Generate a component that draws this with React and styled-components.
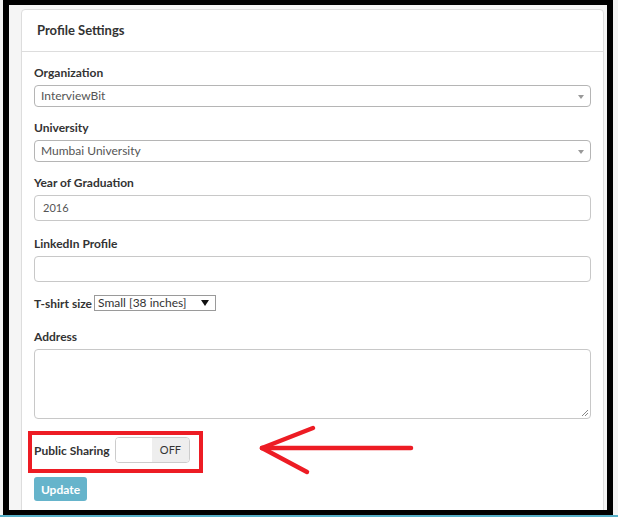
import styled, { createGlobalStyle } from "styled-components";

const GlobalStyle = createGlobalStyle`
  html, body {
    margin: 0;
    padding: 0;
    background: #f3f3f3;
  }
  body {
    font-family: "Lato", "Open Sans", sans-serif;
    color: #333;
  }
  * {
    box-sizing: border-box;
  }
`;

const Page = styled.div`
  width: 618px;
  height: 517px;
  overflow: hidden;
  padding-left: 3px;
  border-bottom: 2px solid #56afc7;
`;

const Frame = styled.div`
  position: relative;
  width: 610px;
  height: 515px;
  border: 6px solid #000;
  border-top-width: 5px;
  border-bottom-width: 5px;
  background: #f5f5f5;
  padding: 4px 3px 0 12px;
  overflow: hidden;
`;

const Panel = styled.section`
  background: #fff;
  border: 1px solid #dddddd;
  border-radius: 4px 4px 0 0;
  height: 520px;
`;

const Header = styled.header`
  height: 42px;
  line-height: 41px;
  padding-left: 15px;
  border-bottom: 1px solid #dddddd;
  font-size: 13px;
  font-weight: 700;
  color: #333;
`;

const Body = styled.div`
  padding: 12px 12px 0 12px;
`;

const Group = styled.div`
  margin-bottom: ${(p) => p.$gap || 12}px;
`;

const Label = styled.label`
  display: block;
  font-size: 12px;
  font-weight: 700;
  line-height: 18px;
  margin-bottom: 3px;
  color: #333;
`;

const Select = styled.div`
  position: relative;
  height: 22px;
  border: 1px solid #b5b5b5;
  border-radius: 4px;
  padding-left: 6px;
  font-size: 12px;
  line-height: 20px;
  color: #555;
  background: #fff;

  &::after {
    content: "";
    position: absolute;
    right: 6px;
    top: 9px;
    border-left: 3px solid transparent;
    border-right: 3px solid transparent;
    border-top: 4px solid #999;
  }
`;

const Input = styled.div`
  height: 26px;
  border: 1px solid #c8c8c8;
  border-radius: 4px;
  padding-left: 8px;
  font-size: 11px;
  line-height: 24px;
  color: #555;
`;

const InlineRow = styled.div`
  display: flex;
  align-items: center;
  height: 16px;
  margin-bottom: 17px;
`;

const InlineLabel = styled.span`
  font-size: 12px;
  font-weight: 700;
  color: #333;
  margin-right: 2px;
`;

const NativeSelect = styled.div`
  position: relative;
  width: 122px;
  height: 16px;
  border: 1px solid #9a9a9a;
  background: #fff;
  padding-left: 3px;
  font-size: 12px;
  line-height: 14px;
  color: #333;

  &::after {
    content: "";
    position: absolute;
    right: 6px;
    top: 4px;
    border-left: 4px solid transparent;
    border-right: 4px solid transparent;
    border-top: 6px solid #111;
  }
`;

const TextArea = styled.div`
  position: relative;
  height: 70px;
  border: 1px solid #c8c8c8;
  border-radius: 4px;
  margin-bottom: 12px;
`;

const Grip = styled.svg`
  position: absolute;
  right: 1px;
  bottom: 1px;
`;

const Highlight = styled.div`
  display: inline-flex;
  align-items: center;
  margin-left: -6px;
  border: 4px solid #ed1c24;
  padding: 2px 9px 6px 2px;
`;

const Toggle = styled.div`
  display: flex;
  width: 75px;
  height: 26px;
  margin-left: 3px;
  border: 1px solid #cccccc;
  border-radius: 4px;
  overflow: hidden;
`;

const ToggleHalf = styled.span`
  flex: 1;
  background: ${(p) => (p.$off ? "#eeeeee" : "#fff")};
  font-size: 11px;
  line-height: 24px;
  text-align: center;
  color: #333;
`;

const UpdateButton = styled.button`
  display: block;
  margin-top: 4px;
  width: 53px;
  height: 24px;
  border: none;
  border-radius: 3px;
  background: #66b4cb;
  color: #fff;
  font-family: inherit;
  font-size: 12px;
  font-weight: 700;
  padding: 0;
`;

const Arrow = styled.svg`
  position: absolute;
  left: 246px;
  top: 417px;
`;

export default function App() {
  return (
    <Page>
      <GlobalStyle />
      <Frame>
        <Panel>
          <Header>Profile Settings</Header>
          <Body>
            <Group>
              <Label>Organization</Label>
              <Select>InterviewBit</Select>
            </Group>
            <Group>
              <Label>University</Label>
              <Select>Mumbai University</Select>
            </Group>
            <Group $gap={14}>
              <Label>Year of Graduation</Label>
              <Input>2016</Input>
            </Group>
            <Group $gap={13}>
              <Label>LinkedIn Profile</Label>
              <Input />
            </Group>
            <InlineRow>
              <InlineLabel>T-shirt size</InlineLabel>
              <NativeSelect>Small [38 inches]</NativeSelect>
            </InlineRow>
            <Label>Address</Label>
            <TextArea>
              <Grip width="9" height="9" viewBox="0 0 9 9">
                <path d="M8 2 L2 8 M8 5 L5 8" stroke="#888" strokeWidth="1" />
              </Grip>
            </TextArea>
            <Highlight>
              <InlineLabel>Public Sharing</InlineLabel>
              <Toggle>
                <ToggleHalf />
                <ToggleHalf $off>OFF</ToggleHalf>
              </Toggle>
            </Highlight>
            <UpdateButton>Update</UpdateButton>
          </Body>
        </Panel>
        {/* red pointer next to the sharing switch */}
        <Arrow width="170" height="60" viewBox="0 0 170 60">
          <g
            stroke="#ed1c24"
            strokeWidth="4.5"
            strokeLinecap="round"
            fill="none"
          >
            <path d="M7 26 L156 26" />
            <path d="M7 26 L58 6" />
            <path d="M7 26 L52 50" />
          </g>
        </Arrow>
      </Frame>
    </Page>
  );
}
